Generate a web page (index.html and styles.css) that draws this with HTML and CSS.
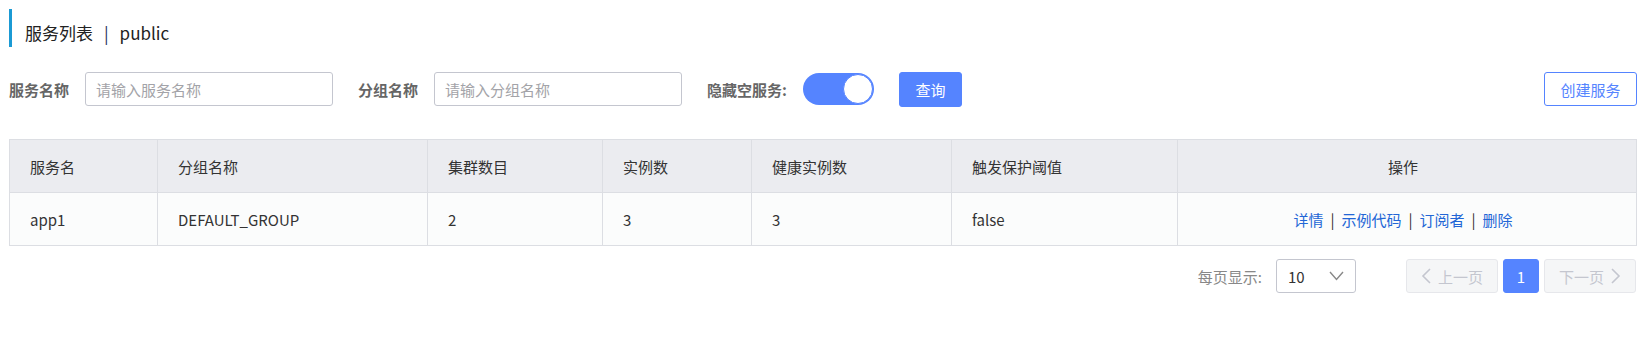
FILE: index.html
```html
<!DOCTYPE html>
<html lang="zh-CN">
<head>
  <meta charset="UTF-8" />
  <meta name="viewport" content="width=device-width, initial-scale=1" />
  <title>服务列表</title>
  <link rel="stylesheet" href="styles.css">
</head>
<body>
  <div class="page">
    <div class="page-title">
      <span>服务列表</span><span class="title-sep">|</span><span>public</span>
    </div>

    <div class="search-bar">
      <span class="field-label">服务名称</span>
      <input type="text" class="text-input" placeholder="请输入服务名称" />
      <span class="field-label">分组名称</span>
      <input type="text" class="text-input" placeholder="请输入分组名称" />
      <span class="field-label">隐藏空服务:</span>
      <div class="switch"><span class="switch-knob"></span></div>
      <button class="btn btn-primary">查询</button>
      <button class="btn btn-outline btn-create">创建服务</button>
    </div>

    <table class="service-table">
      <colgroup>
        <col class="col-name">
        <col class="col-group">
        <col class="col-cluster">
        <col class="col-inst">
        <col class="col-healthy">
        <col class="col-threshold">
        <col>
      </colgroup>
      <thead>
        <tr>
          <th>服务名</th>
          <th>分组名称</th>
          <th>集群数目</th>
          <th>实例数</th>
          <th>健康实例数</th>
          <th>触发保护阈值</th>
          <th class="center">操作</th>
        </tr>
      </thead>
      <tbody>
        <tr>
          <td>app1</td>
          <td>DEFAULT_GROUP</td>
          <td>2</td>
          <td>3</td>
          <td>3</td>
          <td>false</td>
          <td class="center">
            <a class="link">详情</a><span class="sep">|</span><a class="link">示例代码</a><span class="sep">|</span><a class="link">订阅者</a><span class="sep">|</span><a class="link">删除</a>
          </td>
        </tr>
      </tbody>
    </table>

    <div class="pager">
      <span class="pager-label">每页显示:</span>
      <div class="page-size">
        <span>10</span>
        <svg width="15" height="10" viewBox="0 0 15 10"><polyline points="1,1 7.5,8.5 14,1" fill="none" stroke="#888" stroke-width="1.4"/></svg>
      </div>
      <div class="pager-nav">
        <button class="pg-btn pg-prev" disabled>
          <svg width="10" height="16" viewBox="0 0 10 16"><polyline points="9,1 2,8 9,15" fill="none" stroke="#c4c6cf" stroke-width="1.6"/></svg>
          上一页
        </button>
        <button class="pg-btn pg-current">1</button>
        <button class="pg-btn pg-next" disabled>
          下一页
          <svg width="10" height="16" viewBox="0 0 10 16"><polyline points="1,1 8,8 1,15" fill="none" stroke="#c4c6cf" stroke-width="1.6"/></svg>
        </button>
      </div>
    </div>
  </div>
</body>
</html>
```

FILE: styles.css
```css
body {
  margin: 0;
  padding: 0;
  background: #fff;
  color: #333;
  font-family: "Noto Sans CJK SC", "Noto Sans", sans-serif;
  font-size: 15px;
}
.page {
  padding: 9px 12px 0 9px;
}
.page-title {
  display: flex;
  align-items: center;
  height: 38px;
  box-sizing: border-box;
  padding: 8px 0 0 13px;
  border-left: 3px solid #1b9ad4;
  font-size: 17px;
  color: #222;
}
.title-sep {
  margin: 0 11px;
  color: #1d2b5a;
}
.search-bar {
  display: flex;
  align-items: center;
  margin-top: 25px;
  height: 34px;
}
.field-label {
  font-weight: bold;
  color: #666;
  margin-right: 16px;
  white-space: nowrap;
}
.text-input {
  width: 248px;
  height: 34px;
  box-sizing: border-box;
  border: 1px solid #c4c6cf;
  border-radius: 3px;
  padding: 0 10px;
  margin-right: 25px;
  font-family: inherit;
  font-size: 15px;
  color: #333;
  outline: none;
}
.text-input::placeholder {
  color: #a3a3a8;
}
.switch {
  width: 71px;
  height: 32px;
  box-sizing: border-box;
  border-radius: 16px;
  background: #5584ff;
  display: flex;
  justify-content: flex-end;
  align-items: center;
  padding-right: 1px;
  margin-right: 25px;
}
.switch-knob {
  width: 30px;
  height: 30px;
  box-sizing: border-box;
  border-radius: 50%;
  background: #fff;
  border: 1px solid #5584ff;
}
.btn {
  height: 35px;
  box-sizing: border-box;
  border-radius: 3px;
  font-family: inherit;
  font-size: 15px;
  cursor: pointer;
  padding: 0;
  white-space: nowrap;
}
.btn-primary {
  width: 63px;
  background: #5584ff;
  border: 1px solid #5584ff;
  color: #fff;
}
.btn-outline {
  background: #fff;
  border: 1px solid #5584ff;
  color: #5584ff;
}
.btn-create {
  width: 93px;
  height: 34px;
  margin-left: auto;
}
.service-table {
  width: 100%;
  margin-top: 33px;
  border-collapse: collapse;
  table-layout: fixed;
  font-size: 15px;
}
.col-name { width: 148px; }
.col-group { width: 270px; }
.col-cluster { width: 175px; }
.col-inst { width: 149px; }
.col-healthy { width: 200px; }
.col-threshold { width: 226px; }
.service-table th,
.service-table td {
  border: 1px solid #dcdee3;
  height: 53px;
  padding: 0 20px;
  text-align: left;
  font-weight: normal;
  color: #333;
  box-sizing: border-box;
}
.service-table th {
  background: #ebecf0;
}
.service-table td {
  background: #fbfcfc;
}
.service-table .center {
  text-align: center;
  padding: 0 24px 0 16px;
}
.link {
  color: #2266d6;
  cursor: pointer;
}
.sep {
  margin: 0 7px;
  color: #333;
}
.pager {
  display: flex;
  justify-content: flex-end;
  align-items: center;
  margin-top: 13px;
  height: 34px;
}
.pager-label {
  color: #888;
  margin-right: 14px;
}
.page-size {
  width: 80px;
  height: 34px;
  box-sizing: border-box;
  border: 1px solid #c4c6cf;
  border-radius: 3px;
  display: flex;
  align-items: center;
  justify-content: space-between;
  padding: 0 11px 0 11px;
  color: #333;
}
.pager-nav {
  display: flex;
  gap: 5px;
  margin-left: 50px;
  margin-right: 1px;
}
.pg-btn {
  height: 34px;
  box-sizing: border-box;
  border-radius: 3px;
  font-family: inherit;
  font-size: 15px;
  display: flex;
  align-items: center;
  justify-content: center;
  gap: 7px;
  padding: 0;
}
.pg-prev,
.pg-next {
  width: 92px;
  background: #f5f6f7;
  border: 1px solid #e6e7eb;
  color: #c4c6cf;
}
.pg-current {
  width: 36px;
  background: #5584ff;
  border: 1px solid #5584ff;
  color: #fff;
}
```
